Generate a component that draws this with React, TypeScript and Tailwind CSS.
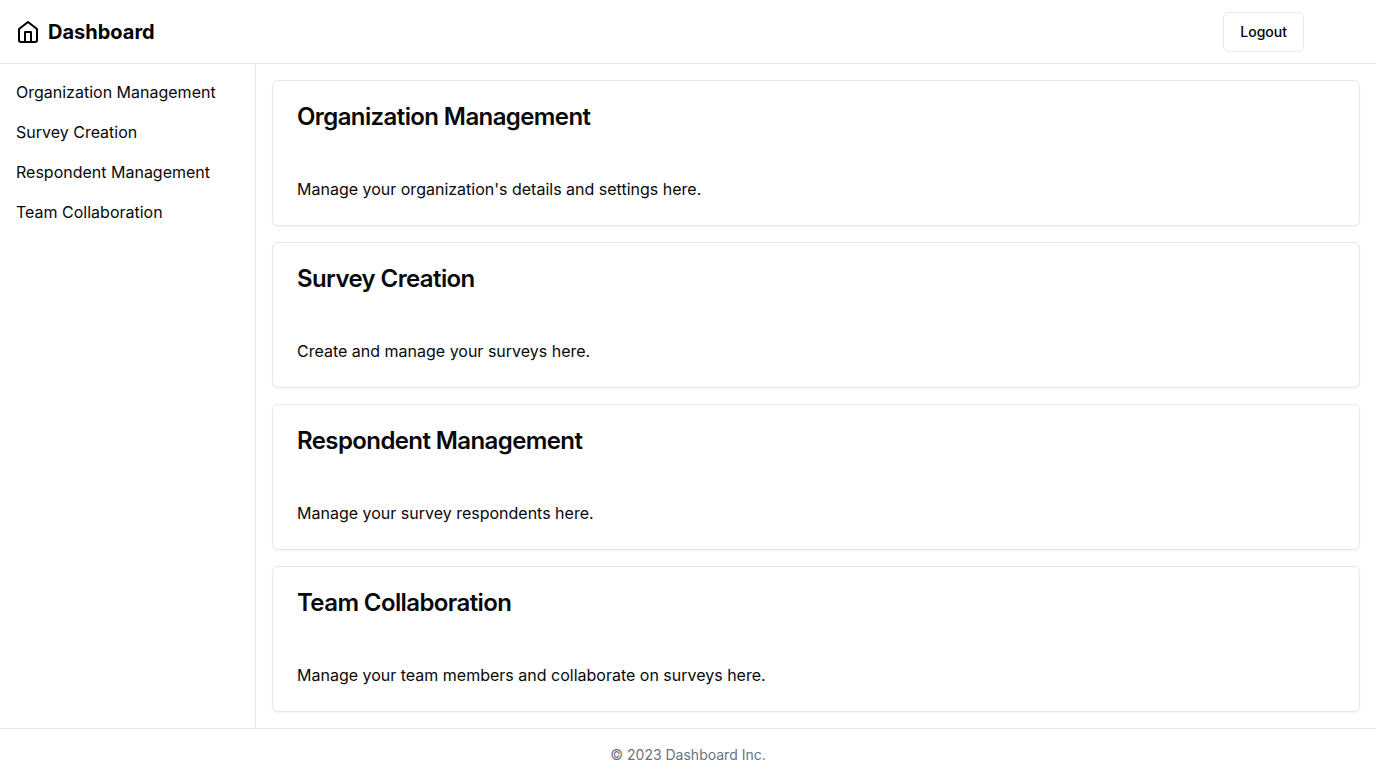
const sections = [
  { id: "organization", title: "Organization Management", text: "Manage your organization's details and settings here." },
  { id: "surveys", title: "Survey Creation", text: "Create and manage your surveys here." },
  { id: "respondents", title: "Respondent Management", text: "Manage your survey respondents here." },
  { id: "team", title: "Team Collaboration", text: "Manage your team members and collaborate on surveys here." },
];

function HomeIcon() {
  return (
    <svg
      className="h-6 w-6"
      viewBox="0 0 24 24"
      fill="none"
      stroke="currentColor"
      strokeWidth="2"
      strokeLinecap="round"
      strokeLinejoin="round"
      aria-hidden="true"
    >
      <path d="m3 9 9-7 9 7v11a2 2 0 0 1-2 2H5a2 2 0 0 1-2-2z" />
      <polyline points="9 22 9 12 15 12 15 22" />
    </svg>
  );
}

export default function App() {
  return (
    <div className="flex min-h-screen flex-col bg-white font-['Inter',sans-serif] text-[#09090b]">
      <header className="flex h-16 items-center justify-between border-b border-[#e5e7eb] pl-4 pr-18 text-black">
        <div className="flex items-center gap-2">
          <HomeIcon />
          <h1 className="text-xl font-bold">Dashboard</h1>
        </div>
        <button
          type="button"
          className="h-10 rounded-md border border-[#e5e7eb] bg-white px-4 text-sm font-medium hover:bg-gray-100"
        >
          Logout
        </button>
      </header>
      <div className="flex flex-1">
        <nav className="w-64 shrink-0 border-r border-[#e5e7eb] p-4">
          <ul className="flex flex-col gap-4">
            {sections.map((s) => (
              <li key={s.id}>
                <a href={`#${s.id}`} className="block">{s.title}</a>
              </li>
            ))}
          </ul>
        </nav>
        <main className="flex flex-1 flex-col gap-4 p-4">
          {sections.map((s) => (
            <section key={s.id} id={s.id} className="rounded-md border border-[#e5e7eb] bg-white shadow-xs">
              <div className="p-6">
                <h2 className="text-2xl leading-6 font-semibold tracking-tight">{s.title}</h2>
              </div>
              <p className="p-6">{s.text}</p>
            </section>
          ))}
        </main>
      </div>
      <footer className="border-t border-[#e5e7eb] p-4 text-center text-sm text-[#6b7280]">
        © 2023 Dashboard Inc.
      </footer>
    </div>
  );
}
